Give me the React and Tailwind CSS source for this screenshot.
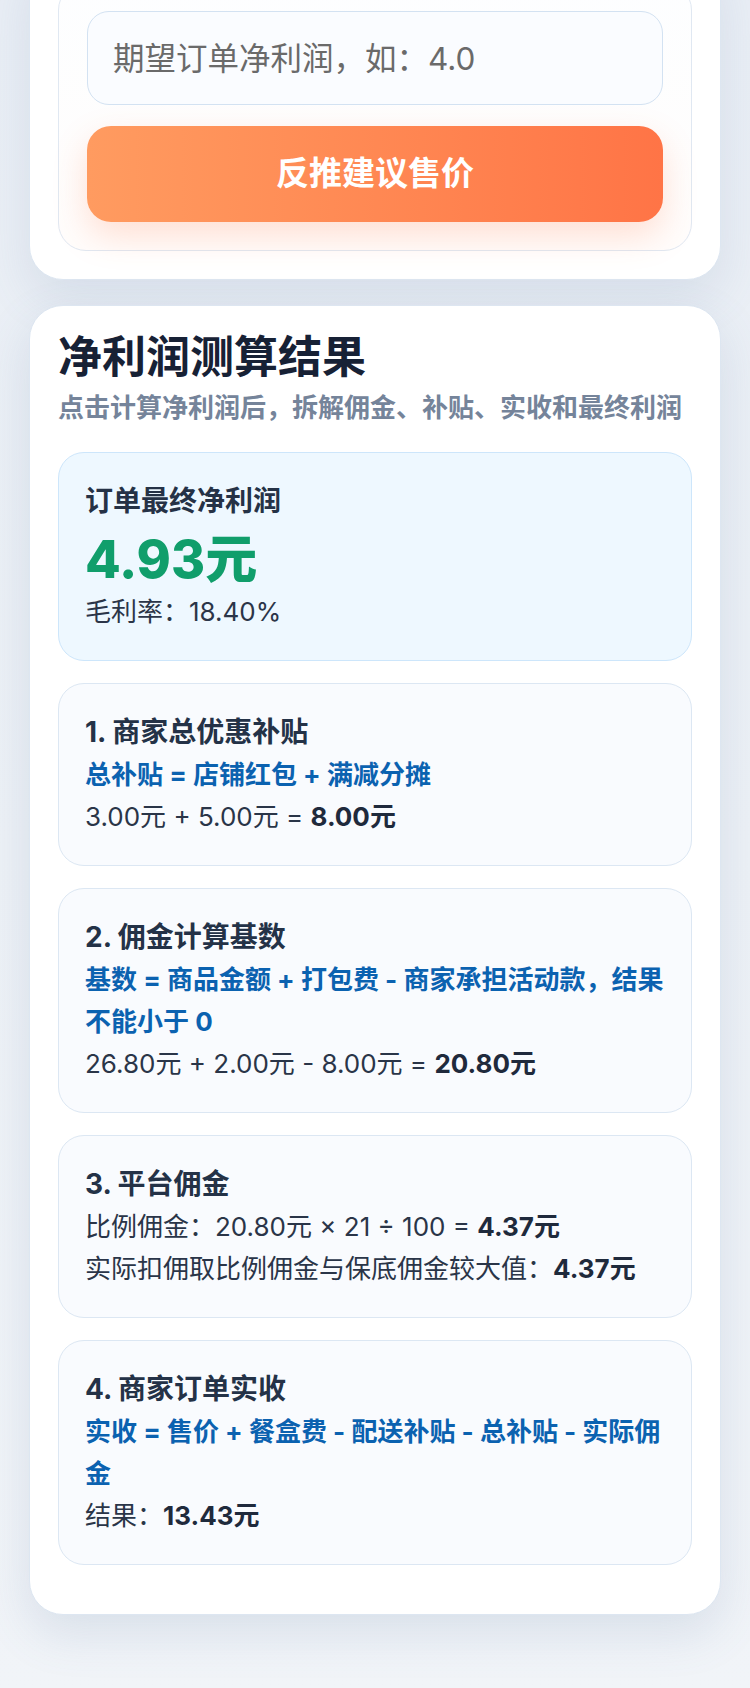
export default function App() {
  return (
    <div className="min-h-[1688px] overflow-hidden bg-gradient-to-b from-[#e9eef5] via-[#edf1f6] to-[#f1f4f8] font-[Inter,'Noto_Sans_CJK_SC',sans-serif] pb-[74px]">
      {/* 顶部反推卡片（上半部分已滚出视口） */}
      <div className="-mt-[47px] mx-[29px] rounded-[34px] border border-[#dde6f1] bg-white p-[28px] shadow-[0_18px_48px_rgba(90,120,160,0.14)]">
        <div className="rounded-[28px] border border-[#e0e8f2] bg-gradient-to-b from-[#fdfeff] to-[#fffdfc] p-[28px]">
          <input
            readOnly
            placeholder="期望订单净利润，如：4.0"
            className="block h-[94px] w-full rounded-[22px] border border-[#d3e2f2] bg-[#fafcff] px-[25px] text-[31.5px] text-[#333] outline-none placeholder:text-[#6a6a6a]"
          />
          <button className="mt-[21px] flex h-[96px] w-full items-center justify-center rounded-[24px] bg-gradient-to-r from-[#ff9b60] to-[#ff7446] text-[33px] font-bold text-white shadow-[0_14px_34px_rgba(255,120,70,0.22)]">
            反推建议售价
          </button>
        </div>
      </div>

      {/* 净利润测算结果 */}
      <div className="mx-[29px] mt-[25px] rounded-[34px] border border-[#dde6f1] bg-white px-[28px] pt-[28px] pb-[49px] shadow-[0_18px_48px_rgba(90,120,160,0.16)]">
        <h2 className="text-[44px] font-bold leading-[46px] text-[#172135]">净利润测算结果</h2>
        <p className="mt-[8px] text-[26px] font-bold leading-[40px] text-[#75849a]">
          点击计算净利润后，拆解佣金、补贴、实收和最终利润
        </p>

        <div className="mt-[24px] flex flex-col gap-[22px]">
          <div className="rounded-[26px] border border-[#cde6fb] bg-[#eef8ff] px-[26px] pt-[28px] pb-[29px]">
            <div className="text-[28px] font-bold leading-[40px] text-[#253246]">订单最终净利润</div>
            <div className="mt-[8px] text-[52px] font-extrabold leading-[62px] text-[#109e6b]">4.93元</div>
            <div className="mt-[2px] text-[26px] leading-[38px] text-[#2b3548]">毛利率：18.40%</div>
          </div>

          <div className="rounded-[26px] border border-[#dce7f3] bg-[#f9fbfe] px-[26px] pt-[26px] pb-[27px]">
            <div className="text-[28px] font-bold leading-[44px] text-[#243247]">1. 商家总优惠补贴</div>
            <div className="text-[26px] font-bold leading-[42px] text-[#0b62b0]">总补贴 = 店铺红包 + 满减分摊</div>
            <div className="text-[26px] leading-[42px] text-[#2a3548]">
              3.00元 + 5.00元 = <span className="font-bold text-[#1f2a3c]">8.00元</span>
            </div>
          </div>

          <div className="rounded-[26px] border border-[#dce7f3] bg-[#f9fbfe] px-[26px] pt-[26px] pb-[27px]">
            <div className="text-[28px] font-bold leading-[44px] text-[#243247]">2. 佣金计算基数</div>
            <div className="text-[26px] font-bold leading-[42px] text-[#0b62b0]">
              <div className="whitespace-nowrap">基数 = 商品金额 + 打包费 - 商家承担活动款，结果</div>
              <div>不能小于 0</div>
            </div>
            <div className="text-[26px] leading-[42px] text-[#2a3548]">
              26.80元 + 2.00元 - 8.00元 = <span className="font-bold text-[#1f2a3c]">20.80元</span>
            </div>
          </div>

          <div className="rounded-[26px] border border-[#dce7f3] bg-[#f9fbfe] px-[26px] pt-[26px] pb-[27px]">
            <div className="text-[28px] font-bold leading-[44px] text-[#243247]">3. 平台佣金</div>
            <div className="text-[26px] leading-[42px] text-[#2a3548]">
              比例佣金：20.80元 × 21 ÷ 100 = <span className="font-bold text-[#1f2a3c]">4.37元</span>
            </div>
            <div className="text-[26px] leading-[42px] text-[#2a3548]">
              实际扣佣取比例佣金与保底佣金较大值：<span className="font-bold text-[#1f2a3c]">4.37元</span>
            </div>
          </div>

          <div className="rounded-[26px] border border-[#dce7f3] bg-[#f9fbfe] px-[26px] pt-[26px] pb-[27px]">
            <div className="text-[28px] font-bold leading-[44px] text-[#243247]">4. 商家订单实收</div>
            <div className="text-[26px] font-bold leading-[42px] text-[#0b62b0]">
              <div className="whitespace-nowrap">实收 = 售价 + 餐盒费 - 配送补贴 - 总补贴 - 实际佣</div>
              <div>金</div>
            </div>
            <div className="text-[26px] leading-[42px] text-[#2a3548]">
              结果：<span className="font-bold text-[#1f2a3c]">13.43元</span>
            </div>
          </div>
        </div>
      </div>
    </div>
  );
}
